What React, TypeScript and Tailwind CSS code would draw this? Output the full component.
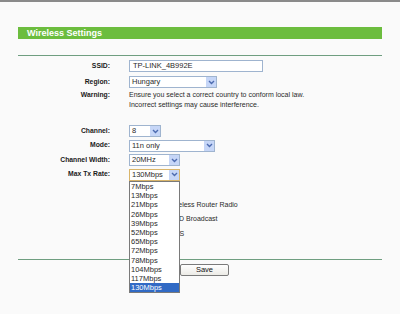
import React from "react";

const rates = [
  "7Mbps",
  "13Mbps",
  "21Mbps",
  "26Mbps",
  "39Mbps",
  "52Mbps",
  "65Mbps",
  "72Mbps",
  "78Mbps",
  "104Mbps",
  "117Mbps",
  "130Mbps",
];

function Arrow() {
  return (
    <span className="flex h-full w-[11px] items-center justify-center border-l border-white bg-[#c6d6f7]">
      <svg width="7" height="5" viewBox="0 0 7 5">
        <path d="M1 1 L3.5 3.5 L6 1" fill="none" stroke="#4d6bb0" strokeWidth="1.4" />
      </svg>
    </span>
  );
}

function Select({ value, width, focus }: { value: string; width: string; focus?: boolean }) {
  return (
    <div
      className={`flex h-[12px] items-stretch border bg-white ${width} ${
        focus ? "border-[#d9b56a]" : "border-[#9fb4cf]"
      }`}
    >
      <span className="flex-1 pl-[2px] text-[7.5px] leading-[10px] text-[#2a2a2a]">{value}</span>
      <Arrow />
    </div>
  );
}

function Row({ label, children, className = "" }: { label: string; children?: React.ReactNode; className?: string }) {
  return (
    <div className={`flex items-center ${className}`}>
      <div className="w-[92px] text-right text-[6.8px] font-bold text-[#1a1a1a]">{label}</div>
      <div className="ml-[19px]">{children}</div>
    </div>
  );
}

function Check({ label, className = "" }: { label: string; className?: string }) {
  return (
    <div className={`ml-[111px] flex h-[10.5px] items-center gap-[6px] ${className}`}>
      <span className="h-[9px] w-[9px] border border-[#1c5180] bg-white" />
      <span className="text-[7px] leading-[10.5px] text-[#2a2a2a]">{label}</span>
    </div>
  );
}

export default function App() {
  return (
    <div className="relative h-[314px] w-[400px] overflow-hidden bg-[#fafafa] font-['Liberation_Sans',Arial,sans-serif]">
      <div className="h-[2px] bg-[#8a8a8a]" />

      <div className="mx-[18px] mt-[25px]">
        {/* Title bar */}
        <div className="h-[12px] bg-[#6cbd3e] pl-[9px] text-[9px] font-bold leading-[12px] text-white">
          Wireless Settings
        </div>
        <div className="mt-[16px] h-px bg-[#6f9e80]" />

        <Row label="SSID:" className="mt-[4px]">
          <div className="h-[12px] w-[134px] border border-[#9fb4cf] bg-white pl-[3px] text-[7.5px] leading-[10px] text-[#2a2a2a]">
            TP-LINK_4B992E
          </div>
        </Row>
        <Row label="Region:" className="mt-[4px]">
          <Select value="Hungary" width="w-[88px]" />
        </Row>
        <div className="mt-[2px] flex items-start">
          <div className="w-[92px] text-right text-[6.8px] font-bold leading-[10px] text-[#1a1a1a]">Warning:</div>
          <div className="ml-[19px] text-[7px] leading-[10px] text-[#2a2a2a]">
            Ensure you select a correct country to conform local law.
            <br />
            Incorrect settings may cause interference.
          </div>
        </div>

        <Row label="Channel:" className="mt-[15px]">
          <Select value="8" width="w-[32px]" />
        </Row>
        <Row label="Mode:" className="mt-[2.5px]">
          <Select value="11n only" width="w-[86px]" />
        </Row>
        <Row label="Channel Width:" className="mt-[2.5px]">
          <Select value="20MHz" width="w-[51px]" />
        </Row>
        <Row label="Max Tx Rate:" className="mt-[2.5px]">
          <Select value="130Mbps" width="w-[51px]" focus />
        </Row>

        <Check label="Enable Wireless Router Radio" className="mt-[19px]" />
        <Check label="Enable SSID Broadcast" className="mt-[4px]" />
        <Check label="Enable WDS" className="mt-[4px]" />

        <div className="mt-[20px] h-px bg-[#6f9e80]" />
        <div className="ml-[162px] mt-[4px] flex h-[11.5px] w-[49px] items-center justify-center rounded-[2px] border border-[#7a7a7a] bg-gradient-to-b from-white to-[#ecebe6] text-[7.5px] text-[#111]">
          Save
        </div>
      </div>

      {/* Open dropdown list */}
      <div className="absolute left-[129px] top-[181px] w-[51px] border border-[#7a7a7a] bg-white">
        {rates.map((r) => (
          <div
            key={r}
            className={`h-[9.2px] pl-[1px] text-[7.5px] leading-[9.2px] ${
              r === "130Mbps" ? "bg-[#316ac5] text-white" : "text-[#2a2a2a]"
            }`}
          >
            {r}
          </div>
        ))}
      </div>
    </div>
  );
}
